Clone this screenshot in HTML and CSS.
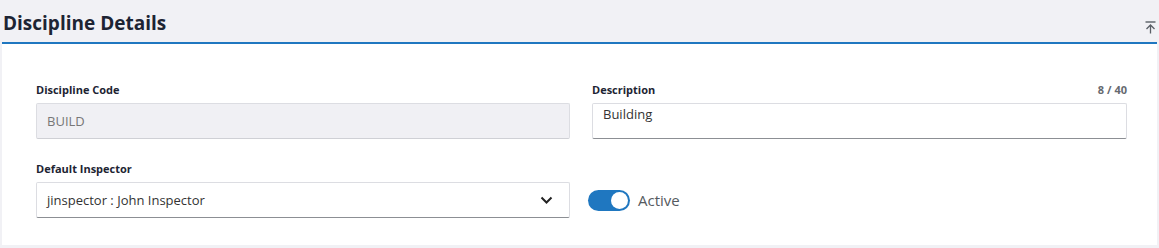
FILE: index.html
```html
<!DOCTYPE html>
<html lang="en">
<head>
<meta charset="utf-8">
<title>Discipline Details</title>
<link rel="stylesheet" href="styles.css">
</head>
<body>
<div class="page">
  <div class="section-head">
    <h2 class="section-title">Discipline Details</h2>
    <button class="collapse-btn" aria-label="Collapse">
      <svg width="11" height="13" viewBox="0 0 11 13"><path d="M0.5 1h10" stroke="#5a5f66" stroke-width="1.4" fill="none"/><path d="M5.5 12.5V4M1.5 8l4-4 4 4" stroke="#5a5f66" stroke-width="1.3" fill="none"/></svg>
    </button>
  </div>
  <div class="panel">
    <div class="grid">
      <div class="field">
        <div class="label-row"><label class="label">Discipline Code</label></div>
        <div class="input input-disabled">BUILD</div>
      </div>
      <div class="field">
        <div class="label-row"><label class="label">Description</label><span class="counter">8 / 40</span></div>
        <div class="input textarea">Building</div>
      </div>
      <div class="field">
        <div class="label-row"><label class="label">Default Inspector</label></div>
        <div class="input select">
          <span>jinspector : John Inspector</span>
          <svg class="chevron" width="13" height="8" viewBox="0 0 13 8"><path d="M1.5 1.5l5 5 5-5" stroke="#222" stroke-width="2" fill="none"/></svg>
        </div>
      </div>
      <div class="field toggle-field">
        <span class="toggle"><span class="knob"></span></span>
        <span class="toggle-label">Active</span>
      </div>
    </div>
  </div>
</div>
</body>
</html>
```

FILE: styles.css
```css
* { box-sizing: border-box; }
html, body { margin: 0; padding: 0; }
body {
  background: #f1f1f5;
  font-family: "Open Sans", "Noto Sans", sans-serif;
  color: #1d2433;
  width: 1159px;
  height: 248px;
  overflow: hidden;
}
.page {
  padding: 0 2px 3px 2px;
}
.section-head {
  display: flex;
  align-items: flex-end;
  justify-content: space-between;
  height: 44px;
  border-bottom: 2px solid #1f77c0;
  padding: 0 0 7px 1px;
}
.section-title {
  margin: 0;
  font-size: 19px;
  font-weight: 700;
  line-height: 24px;
  color: #1d2433;
}
.collapse-btn {
  border: 0;
  background: transparent;
  padding: 0;
  margin: 0 1px 0 0;
  width: 11px;
  height: 13px;
  display: flex;
  position: relative;
  top: -1px;
}
.panel {
  background: #fff;
  height: 201px;
  padding: 38px 29px 0 34px;
}
.grid {
  display: grid;
  grid-template-columns: 534px 535px;
  column-gap: 22px;
  row-gap: 22px;
}
.label-row {
  display: flex;
  justify-content: space-between;
  align-items: center;
  height: 15px;
  margin-bottom: 6px;
}
.label {
  font-size: 11px;
  font-weight: 700;
  color: #1d2433;
}
.counter {
  font-size: 11px;
  font-weight: 700;
  color: #666a70;
}
.input {
  height: 36px;
  border: 1px solid #dcdde2;
  border-bottom: 1px solid #8c8f94;
  border-radius: 2px;
  font-size: 13px;
  color: #333;
  padding: 0 10px;
  display: flex;
  align-items: center;
}
.input-disabled {
  background: #f0f0f4;
  color: #777;
  border-color: #dcdde2;
  border-bottom-color: #cfd0d5;
}
.textarea {
  align-items: flex-start;
  padding-top: 1px;
  color: #333;
}
.select {
  justify-content: space-between;
  padding-right: 16px;
  color: #333;
}
.chevron { display: block; }
.toggle-field {
  display: flex;
  align-items: center;
  gap: 8px;
  padding-top: 21px;
  margin-left: -4px;
}
.toggle {
  display: inline-flex;
  align-items: center;
  justify-content: flex-end;
  width: 42px;
  height: 21px;
  border-radius: 11px;
  background: #1f77c0;
  padding: 2px;
}
.knob {
  width: 17px;
  height: 17px;
  border-radius: 50%;
  background: #fff;
}
.toggle-label {
  font-size: 15px;
  color: #555a60;
}
```
